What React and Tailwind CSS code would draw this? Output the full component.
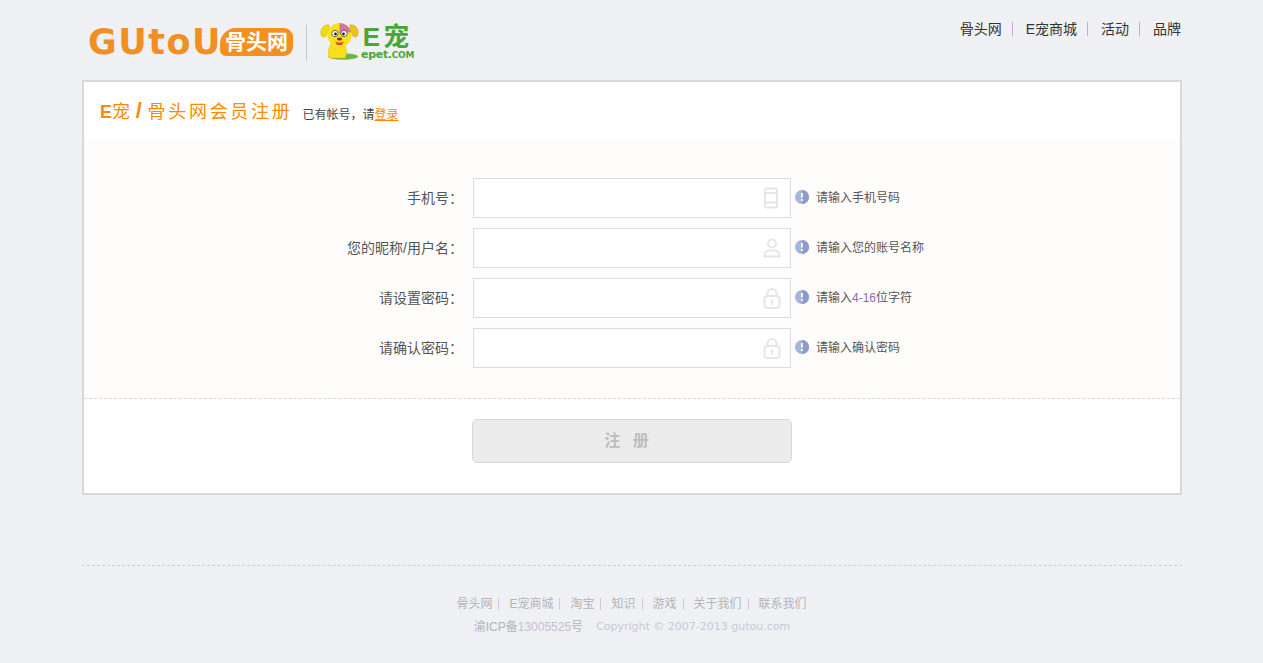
const CJK = 'font-["Liberation_Sans","Noto_Sans_CJK_SC",sans-serif]'

const navLinks = ['骨头网', 'E宠商城', '活动', '品牌']
const footerLinks = ['骨头网', 'E宠商城', '淘宝', '知识', '游戏', '关于我们', '联系我们']

function PhoneIcon() {
  return (
    <svg width="16" height="22" viewBox="0 0 16 22" fill="none" stroke="#e6e6e6" strokeWidth="2" className="mr-[2px]">
      <rect x="2" y="1.5" width="12" height="19" rx="2" />
      <path d="M2 6h12M2 15.5h12" />
    </svg>
  )
}

function UserIcon() {
  return (
    <svg width="18" height="20" viewBox="0 0 18 20" fill="none" stroke="#e6e6e6" strokeWidth="2">
      <circle cx="9" cy="5.5" r="4" />
      <path d="M1.5 18.5c0-4 2-6 5-6h5c3 0 5 2 5 6z" />
    </svg>
  )
}

function LockIcon() {
  return (
    <svg width="18" height="21" viewBox="0 0 18 21" fill="none" stroke="#e6e6e6" strokeWidth="2">
      <path d="M4.5 8V5.5a4.5 4.5 0 0 1 9 0V8" />
      <rect x="1.5" y="8" width="15" height="12" rx="3" />
      <circle cx="9" cy="13" r="1.5" fill="#e6e6e6" stroke="none" />
      <path d="M9 14v3" strokeWidth="1.5" />
    </svg>
  )
}

function InfoIcon() {
  return (
    <svg width="14" height="14" viewBox="0 0 14 14" className="shrink-0 -translate-y-px">
      <circle cx="7" cy="7" r="7" fill="#a6b6dc" />
      <path d="M7 0a7 7 0 0 1 0 14z" fill="#8a9dc9" />
      <rect x="6" y="3" width="2" height="4.5" fill="#f4f2e6" />
      <rect x="6" y="9" width="2" height="2" fill="#f4f2e6" />
    </svg>
  )
}

function DogLogo() {
  return (
    <svg width="39" height="38" viewBox="0 0 39 38" className="-mt-[5px]">
      <ellipse cx="23" cy="34.5" rx="15" ry="3.2" fill="#6fb83f" />
      <path d="M11 22c-3 4-3 10-2 14h16c2-4 2-10-1-14z" fill="#f7e11c" stroke="#d8be14" strokeWidth="0.5" />
      <path d="M9 3C4 2 0 7 1 12c0 3 3 4 5 2l3-6z" fill="#f2d91a" stroke="#c9b21a" strokeWidth="0.6" />
      <path d="M30 3c5-1 9 4 8 9 0 3-3 4-5 2l-3-6z" fill="#e9c22a" stroke="#c9a21a" strokeWidth="0.6" />
      <circle cx="19.5" cy="13" r="12" fill="#f7e11c" />
      <path d="M19.5 1a12 12 0 0 1 11.6 9l-11.6 2z" fill="#d7739a" />
      <circle cx="15" cy="11.5" r="3.2" fill="#fff" stroke="#444" strokeWidth="0.8" />
      <circle cx="24" cy="11.5" r="3.2" fill="#fff" stroke="#444" strokeWidth="0.8" />
      <circle cx="15.5" cy="12" r="1.4" fill="#222" />
      <circle cx="23.5" cy="12" r="1.4" fill="#222" />
      <ellipse cx="19.5" cy="17" rx="2.6" ry="1.5" fill="#7a3b12" />
      <path d="M15 19c2 2 7 2 9 0l-2 4h-5z" fill="#e0452c" />
    </svg>
  )
}

function Logos() {
  return (
    <div className="flex items-center h-20 pt-[6px] pl-[6px]">
      <div className="flex items-center w-[205px] h-[36px] -mt-[2px]">
        <span className='font-["DejaVu_Sans",sans-serif] font-bold text-[35px] leading-none tracking-[1.5px] text-[#f18f22] w-[134px] shrink-0'>GUtoU</span>
        <span className="flex-1 h-[28px] bg-[#f39020] rounded-r-[9px] rounded-tl-[16px] rounded-bl-[6px] text-white font-bold text-[21px] leading-[28px] text-center -ml-[2px]">骨头网</span>
      </div>
      <div className="w-px h-[36px] bg-[#c8c8c8] ml-[13px] mr-[13px]" />
      <DogLogo />
      <div className="flex flex-col items-center ml-[2px] -mt-[1px]">
        <span className="text-[#4aa537] font-bold text-[26px] leading-[24px] tracking-[3px]">E宠</span>
        <span className='font-["DejaVu_Sans",sans-serif] font-bold text-[#4aa537] text-[11px] leading-[12px] tracking-[-0.3px]'>
          epet.<span className="uppercase text-[9px]">com</span>
        </span>
      </div>
    </div>
  )
}

function FormRow({ label, icon, children }) {
  return (
    <div className="flex items-center h-10">
      <label className="w-[389px] text-right text-[14px] text-[#555] pr-[10px] shrink-0">{label}</label>
      <div className="relative w-[318px] h-10 shrink-0">
        <input className="w-full h-full bg-white border border-[#dcdcdc] outline-none" />
        <span className="absolute inset-y-0 right-[10px] flex items-center">{icon}</span>
      </div>
      <div className="flex items-center ml-1 text-[12px] text-[#555]">
        <InfoIcon />
        <span className="ml-[7px]">{children}</span>
      </div>
    </div>
  )
}

export default function App() {
  return (
    <div className={`min-h-[663px] bg-[#eef0f4] bg-[radial-gradient(#f1f2f6_1px,transparent_1px)] bg-[length:4px_4px] ${CJK}`}>
      <div className="w-[1100px] ml-[82px]">
        <header className="flex justify-between h-20">
          <Logos />
          <nav className="flex items-center h-[18px] mt-5 pr-px text-[14px] text-[#333]">
            {navLinks.map((link, i) => (
              <div key={link} className="flex items-center">
                <a>{link}</a>
                {i < navLinks.length - 1 && <span className="w-px h-[14px] bg-[#d8a0d8] ml-[10px] mr-[13px]" />}
              </div>
            ))}
          </nav>
        </header>

        <main className="bg-white border-2 border-[#d8d8d8]">
          <div className="flex items-center h-[58px] pl-4">
            <h1 className="-mt-[2px] text-[18px] font-normal text-[#ff8a00] tracking-[2.7px]">
              <b className="text-[18px] tracking-normal">E</b>宠<b className="text-[22px] mx-[3px]">/</b>骨头网会员注册
            </h1>
            <p className="ml-[10px] mt-[7px] text-[12px] text-[#444]">
              已有帐号，请<a className="text-[#ff8a00] underline">登录</a>
            </p>
          </div>

          <form>
            <div className="flex flex-col gap-[10px] pt-[38px] pb-[30px] bg-[#fffdfc] border-b border-dashed border-[#d8d8d8]">
              <FormRow label="手机号：" icon={<PhoneIcon />}>请输入手机号码</FormRow>
              <FormRow label="您的昵称/用户名：" icon={<UserIcon />}>请输入您的账号名称</FormRow>
              <FormRow label="请设置密码：" icon={<LockIcon />}>
                请输入<span className="text-[#8a6bb5]">4-16</span>位字符
              </FormRow>
              <FormRow label="请确认密码：" icon={<LockIcon />}>请输入确认密码</FormRow>
            </div>
            <div className="pt-5 pb-[30px] pl-[388px]">
              <button type="button" className="block w-[320px] h-11 pr-[7px] bg-[#ececec] border border-[#d8d8d8] rounded-[5px] text-[16px] font-bold text-[#bdbdbd] tracking-[4px]">
                注 册
              </button>
            </div>
          </form>
        </main>

        <footer className="mt-[70px] border-t border-dashed border-[#cfcfcf] pt-[29px] text-[12px] text-[#b4b4b4] text-center">
          <div className="flex justify-center items-center h-[18px] pr-px">
            {footerLinks.map((link, i) => (
              <div key={link} className="flex items-center">
                <a>{link}</a>
                {i < footerLinks.length - 1 && <span className="w-px h-[12px] bg-[#dcc4dc] ml-[6px] mr-[10px]" />}
              </div>
            ))}
          </div>
          <div className="flex justify-center items-center h-[18px] mt-[5px]">
            <span>渝ICP备<span className="text-[#c8bcd0]">13005525</span>号</span>
            <span className='ml-[13px] text-[11px] text-[#c8c8d4] font-["DejaVu_Sans",sans-serif]'>Copyright © 2007-2013 gutou.com</span>
          </div>
        </footer>
      </div>
    </div>
  )
}
